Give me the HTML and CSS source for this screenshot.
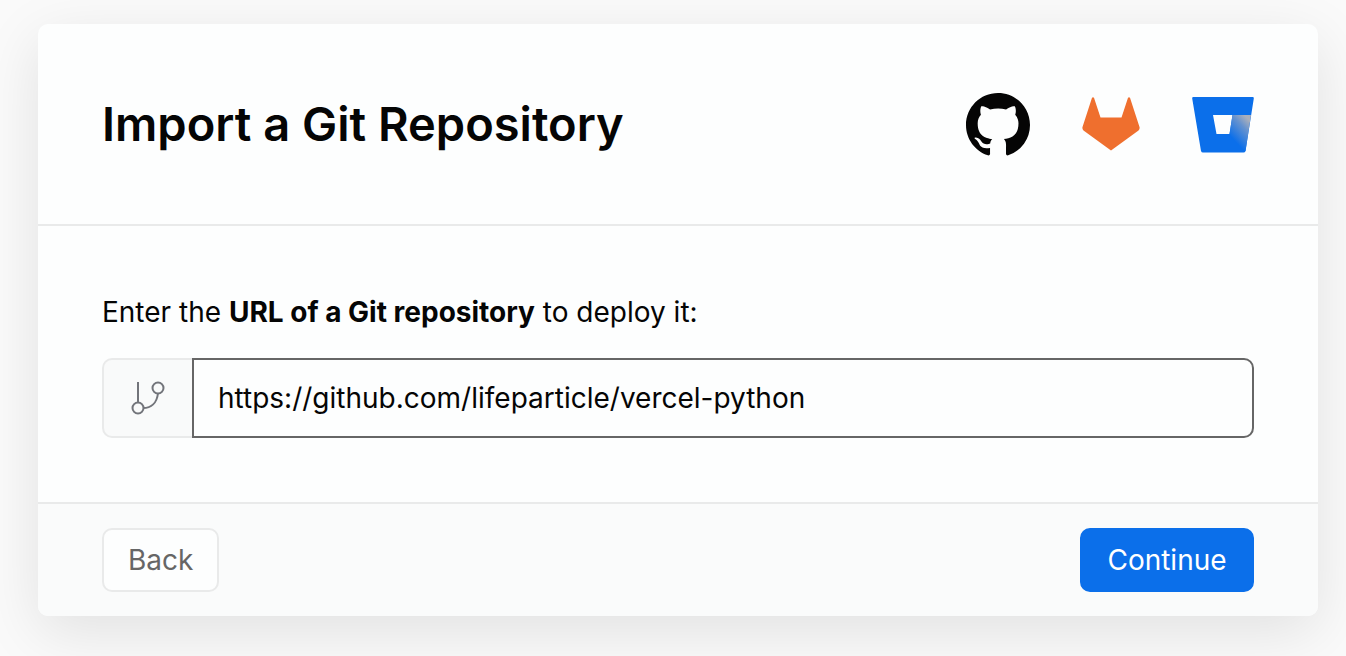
FILE: index.html
```html
<!DOCTYPE html>
<html lang="en">
<head>
<meta charset="utf-8">
<meta name="viewport" content="width=device-width, initial-scale=1">
<title>Import a Git Repository</title>
<link rel="stylesheet" href="styles.css">
</head>
<body>
<main class="page">
  <form class="card">
    <header class="card-header">
      <h1 class="title">Import a Git Repository</h1>
      <div class="providers">
        <svg class="github" viewBox="0 0 16 16" role="img" aria-label="GitHub"><path fill="#050505" d="M8 0C3.58 0 0 3.58 0 8c0 3.54 2.29 6.53 5.47 7.59.4.07.55-.17.55-.38 0-.19-.01-.82-.01-1.49-2.01.37-2.53-.49-2.69-.94-.09-.23-.48-.94-.82-1.13-.28-.15-.68-.52-.01-.53.63-.01 1.08.58 1.23.82.72 1.21 1.87.87 2.33.66.07-.52.28-.87.51-1.07-1.78-.2-3.64-.89-3.64-3.95 0-.87.31-1.59.82-2.15-.08-.2-.36-1.02.08-2.12 0 0 .67-.21 2.2.82.64-.18 1.32-.27 2-.27s1.36.09 2 .27c1.53-1.04 2.2-.82 2.2-.82.44 1.1.16 1.92.08 2.12.51.56.82 1.27.82 2.15 0 3.07-1.87 3.75-3.65 3.95.29.25.54.73.54 1.48 0 1.07-.01 1.93-.01 2.2 0 .21.15.46.55.38A8.01 8.01 0 0 0 16 8c0-4.42-3.58-8-8-8z"/></svg>
        <svg class="gitlab" viewBox="0 0 58 56" role="img" aria-label="GitLab"><path fill="#ef6f2e" d="M10 .8Q11 -.5 12 .8L18.500 20.500H39.500L46 .8Q47 -.5 48 .8L57.500 30Q58 32 56.500 33.500L29 53.500L1.500 33.500Q0 32 .5 30Z"/></svg>
        <svg class="bitbucket" viewBox="0 0 62 56" role="img" aria-label="Bitbucket">
          <defs><linearGradient id="bucket-shade" gradientUnits="userSpaceOnUse" x1="60" y1="20" x2="39" y2="40"><stop offset=".15" stop-color="#a9afbc"/><stop offset=".45" stop-color="#6592cf"/><stop offset="1" stop-color="#0b6fea"/></linearGradient></defs>
          <path fill="#0b6fea" fill-rule="evenodd" d="M1 0H61Q62 0 61.800 1.500L53.500 54Q53 55.500 51.500 55.500H11Q9.500 55.500 9 54L.2 1.500Q0 0 1 0ZM21 18L24.500 37H37.500L40.500 18Z"/>
          <path fill="url(#bucket-shade)" d="M40.500 18H59L53.500 54L51.500 55L37.500 37Z"/>
        </svg>
      </div>
    </header>
    <section class="card-body">
      <label class="label" for="repo-url">Enter the <strong>URL of a Git repository</strong> to deploy it:</label>
      <div class="field">
        <span class="prefix">
          <svg class="branch" viewBox="0 0 34 34" aria-hidden="true" fill="none" stroke="#72747a" stroke-width="2"><path d="M7 1V21M12 27C20 27 26 22 27 12"/><circle cx="7" cy="27" r="5.500"/><circle cx="27" cy="7" r="5.500"/></svg>
        </span>
        <input class="url" id="repo-url" type="text" value="https://github.com/lifeparticle/vercel-python" spellcheck="false">
      </div>
    </section>
    <footer class="card-footer">
      <button class="button back" type="button">Back</button>
      <button class="button continue" type="button">Continue</button>
    </footer>
  </form>
</main>
</body>
</html>
```
FILE: styles.css
```css
* {
  box-sizing: border-box;
}

body {
  margin: 0;
  background: #fafafa;
  color: #050505;
  font-family: Inter, "Liberation Sans", sans-serif;
  font-size: 28px;
  line-height: 40px;
}

.page {
  min-height: 100vh;
  padding: 24px 28px 40px 38px;
  overflow: hidden;
}

.card {
  border-radius: 10px;
  background: #fdfefe;
  box-shadow: 0 16px 60px rgba(0, 0, 0, 0.1);
  overflow: hidden;
}

.card-header {
  display: flex;
  align-items: center;
  justify-content: space-between;
  padding: 67px 64px;
  border-bottom: 2px solid #e9eaea;
}

.title {
  margin: 0;
  font-size: 47px;
  font-weight: 600;
  line-height: 64px;
}

.providers {
  display: flex;
  align-items: center;
  gap: 52px;
  padding-top: 2px;
}

.github {
  width: 64px;
  height: 64px;
}

.gitlab {
  width: 58px;
  height: 56px;
}

.bitbucket {
  width: 62px;
  height: 56px;
}

.card-body {
  padding: 66px 64px 64px;
}

.label {
  display: block;
  margin-bottom: 26px;
}

.label strong {
  font-weight: 700;
}

.field {
  display: flex;
  height: 80px;
}

.prefix {
  display: flex;
  align-items: center;
  justify-content: center;
  width: 90px;
  border: 2px solid #e9eaea;
  border-right: 0;
  border-radius: 10px 0 0 10px;
  background: #f9fafa;
}

.branch {
  width: 34px;
  height: 34px;
}

.url {
  flex: 1;
  min-width: 0;
  padding: 0 24px;
  border: 2px solid #666;
  border-radius: 0 10px 10px 0;
  background: #fdfefe;
  color: inherit;
  font: inherit;
  outline: none;
}

.card-footer {
  display: flex;
  justify-content: space-between;
  padding: 24px 64px;
  border-top: 2px solid #e9eaea;
  background: #fafbfb;
}

.button {
  height: 64px;
  padding: 0 24px;
  border: 2px solid #e9eaea;
  border-radius: 10px;
  font: inherit;
}

.back {
  background: #fdfefe;
  color: #666;
}

.continue {
  min-width: 174px;
  border-color: #0b6fea;
  background: #0b6fea;
  color: #fff;
}
```
